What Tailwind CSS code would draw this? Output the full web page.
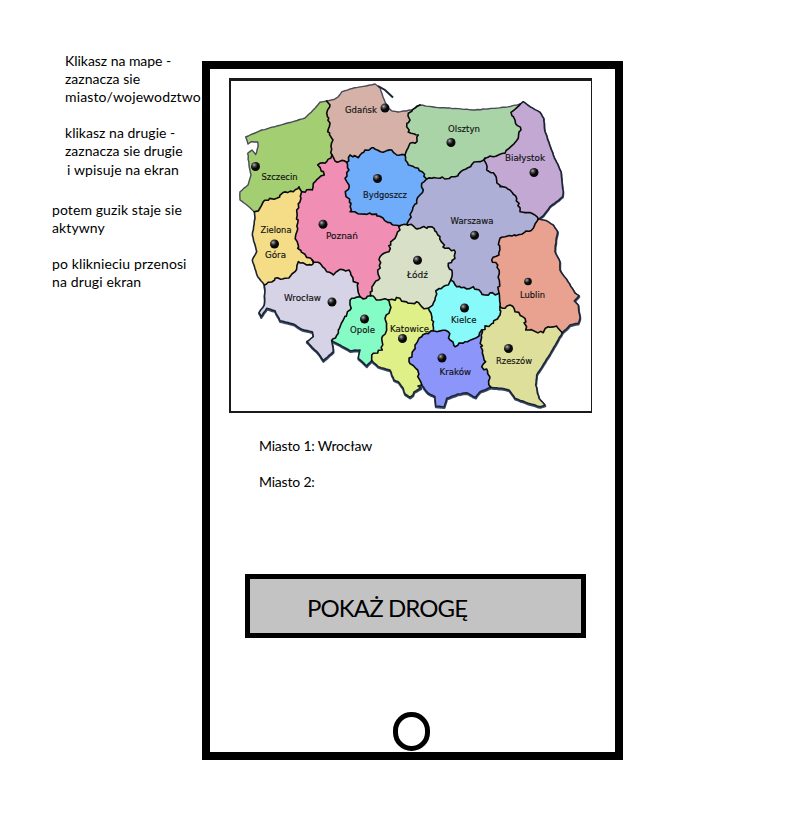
<!DOCTYPE html>
<html lang="pl">
<head>
<meta charset="utf-8">
<title>Pokaż drogę</title>
<script src="https://cdn.jsdelivr.net/npm/@tailwindcss/browser@4"></script>
</head>
<body class="bg-white text-black font-[Lato,'Noto_Sans',sans-serif] text-[14px] leading-[18px]">
<main class="flex w-[811px] h-[831px] overflow-hidden pt-[61px]">
  <aside class="w-[202px] shrink-0 pl-[52px] -mt-[9px] whitespace-nowrap tracking-[0.03px]">
    <p class="pl-[13px]"><span class="tracking-[-0.04px]">Klikasz na mape -</span><br>zaznacza sie<br><span class="tracking-[0.13px]">miasto/wojewodztwo</span></p>
    <p class="pl-[13px] pt-[18px]">klikasz na drugie -<br>zaznacza sie drugie</p>
    <p class="pl-[15px] pt-px tracking-[0.13px]">i wpisuje na ekran</p>
    <p class="pt-[22px] tracking-[0.1px]">potem guzik staje sie<br>aktywny</p>
    <p class="pt-[18px] tracking-[0.12px]">po kliknieciu przenosi<br>na drugi ekran</p>
  </aside>
  <section class="w-[421px] h-[699px] shrink-0 border-8 border-black flex flex-col">
    <div class="ml-[19px] mt-[9px] w-[363px] h-[335px] shrink-0 border-2 border-t-3 border-r border-[#1a1a1e]">
      <svg class="block w-[360px] h-[330px]" viewBox="231 81 360 330" id="map">
        <defs>
          <radialGradient id="pin" cx="35%" cy="32%" r="70%">
            <stop offset="0" stop-color="#b5b5b5"/><stop offset=".3" stop-color="#444"/><stop offset=".6" stop-color="#080808"/>
          </radialGradient>
        </defs>
        <g id="shadow"></g><g id="fills"></g><g id="lines"></g><g id="pins"></g>
        <g id="labels" font-family="DejaVu Sans, sans-serif" font-size="9" fill="#111" stroke="#111" stroke-width=".15"></g>
      </svg>
    </div>
    <div class="ml-[49px] mt-[24px] flex flex-col gap-[18px] tracking-[-0.2px]">
      <p>Miasto 1: Wrocław</p>
      <p>Miasto 2:</p>
    </div>
    <button class="ml-[35px] mt-[83px] w-[341px] h-[64px] shrink-0 border-[5px] border-black bg-[#c3c3c3] pl-[57px] pt-[4px] text-left text-[24px] leading-[50px] tracking-[-0.9px]">POKAŻ DROGĘ</button>
    <div class="ml-[183px] mt-[74px] w-[37px] h-[39px] shrink-0 rounded-full border-[5px] border-black"></div>
  </section>
</main>
<script>
// Borders between provinces, each listed once and shared by its two neighbours.
const arcs = {
  // outer edge, clockwise
  cS:"254.3,211.7 248,206 240,200 240,191.7 248,185 251,175 249,165 247.7,153.3 252,150 255.7,154.5 258,147 257.7,142 251.7,141.7 248,144 245.7,137 261.7,130 275,126.7 305,118 315,108.3 320,102.3 326.7,101",
  cG:"326.7,101 334,99.5 338,97 342,91.7 355,87.7 366,86 375,84 380,87.7 383,97 388,108 392,111 398,112 411.7,110 420,105",
  cO:"420,105 435,107.3 455,108.5 475,110 505,107.3 520,104.3",
  cB:"520,104.3 523.3,101.7 530,106.7 540,112.3 543.7,118.3 545,131.7 553.3,155 561,171.7 562,182 563.3,191.7 562.7,196.7 550,206.7 543.3,215.7 538.3,219",
  cL:"538.3,219 546,220.5 553.3,225 557.7,231.7 556,240 555,251.7 560,262 560,270 568,281.7 575,293 579,295.7 574.3,301 578.3,305 580,318.3 578.3,323.3 570,325 562.3,332.7",
  cR:"562.3,332.7 548.3,356.7 536.7,375 535.7,385 539,398.3 545,405 540,406.7 528.3,403.3 515,398.3 509,390 501.7,388.3 490.7,387.3",
  cK:"490.7,387.3 480,391.7 475.7,397.3 466.7,392.7 458,394 446.7,398.3 444.3,406.7 435.7,406 435,396.7 428.3,393.3 421.7,385",
  cT:"421.7,385 418,386 421,388 414,392 413,395 410,397.3 405,394 403,388 398.3,381.7 394,380 390,370 378.3,366.7 371.7,360.7",
  cP:"371.7,360.7 366.7,366 358.3,358.3 360,350 350,350.7 340,345 331.7,340.7",
  cW:"331.7,340.7 333.3,351.7 323.3,360.7 318.3,353.3 306.7,341.7 313.3,336.7 312.3,331.7 301.7,329.3 293.3,324 280,320.7 275,310.7 266.7,308.3 261,316.7 259,312.7 264.3,305 265,290 264.3,285",
  cZ:"264.3,285 257.7,276.7 252.3,260 256.7,251.7 252.3,235 255,218.3 254.3,211.7",
  // inner borders
  SG:"326.7,101 330,105 326.7,113.3 330,123 327.7,131.7 333,140 331,146.7 332,155",
  GP:"332,155 335,161 346.7,162.3",
  SP:"332,155 325,163.3 317.7,165 324.3,175 313.3,183.3 312.3,190 301.7,191.7",
  SZ:"301.7,191.7 299,186.7 293.3,191.7 283.3,192.3 276.7,198.3 264.7,200.3 260,208 254.3,211.7",
  ZP:"301.7,191.7 301,198.3 296.7,210 297.7,228.3 295.7,235 297.7,248.3 305,254.3 312.3,260",
  ZW:"312.3,260 311.7,265 306.7,265 298.3,261.7 295,271.7 285,278.3 275,278.3 271.7,282 264.3,285",
  PW:"312.3,260 320,263.3 326.7,271.7 333.3,275 340,269.3 349,270 353.3,281.7 358.3,283.3 360,296.7",
  PO:"360,296.7 363.3,299 370.7,295.7",
  WO:"360,296.7 351.7,298.3 350,310 343.3,320 338.3,333.3 331.7,340.7",
  PL:"370.7,295.7 373.3,285 378.3,280 380,256.7 389,251.7 390.7,241.7 395,238.3 400,230 400,225.7",
  GB:"346.7,162.3 350,155 358.3,157.7 365,150 373.3,147.7 383.3,152.3 391.7,150 396.7,155 405,155",
  GO:"420,105 408.3,113.3 410,120 406.7,126.7 411,133.3 418.3,135 415,143.3 410,143.3 405,155",
  BO:"405,155 408.3,165 418.3,168.3 426.7,179",
  OV:"426.7,179 440,178.3 455,176.7 463.3,170 476.7,161.7 485,158.3",
  OA:"520,104.3 511,112.3 515,120 521,130 518.3,138.3 505,153.3 493.3,156.7 485,158.3",
  AV:"485,158.3 486.7,170 495,175 500,186.7 510,190 516.7,198.3 520,211.7 531.7,213.3 538.3,219",
  BV:"426.7,179 421.7,183.3 423.3,190 416.7,200 411.7,211.7 407.7,225",
  BP:"346.7,162.3 349,170 345,178.3 349,185 345.7,195 351,203.3 350,211.7 358,213.7 370,213 383.3,218.3 391.7,224.3 400,225.7",
  BL:"400,225.7 407.7,225",
  LV:"407.7,225 420,228.3 431.7,226.7 440,236.7 445,248.3 454.3,250 455,258.3 448.3,263.3 452.3,273.3 450.7,280",
  VE:"450.7,280 456.7,286.7 466.7,289 473.3,286.7 485,295 499,293.3",
  VU:"538.3,219 533.3,228.3 521.7,234.3 500,238.3 499,255 491.7,260 497.7,265 499,293.3",
  UE:"499,293.3 500,306.7",
  UR:"500,306.7 505,308.3 510,305 515,311.7 525,318.3 525.7,330 543.3,332.7 548.3,326.7 556.7,326 562.3,332.7",
  ER:"500,306.7 500,315 493.3,323.3 481.7,330",
  EK:"481.7,330 479,336 465,341.7 455,346.7 450,340 448.3,331.7 433.3,330.7",
  KR:"481.7,330 481,340 482.3,353.3 485.7,361.7 481.7,366.7 487.7,371.7 490.7,387.3",
  ET:"428.3,308.3 431.7,320 433.3,330.7",
  LE:"450.7,280 448.3,285 435.7,291 435,300 428.3,308.3",
  LO:"370.7,295.7 380,300 388.3,300",
  LT:"388.3,300 400,298.3 408.3,303.3 416.7,301.7 421.7,306.7 428.3,308.3",
  OT:"388.3,300 390,310 385,318.3 386.7,330 381.7,338.3 382.3,350 373.3,353.3 371.7,360.7",
  TK:"433.3,330.7 421.7,336.7 415,345 409,361.7 417.7,370 417.7,376.7 421.7,385"
};
const regions = [
  ["#a3ce72","cS SG SP SZ"],
  ["#d5b1a7","cG GO -GB -GP -SG"],
  ["#a9d4a8","cO OA -OV -BO -GO"],
  ["#c2a8d3","cB -AV -OA"],
  ["#e9a28f","cL -UR -UE -VU"],
  ["#dfdf9c","cR -KR -ER UR"],
  ["#8c95fa","cK -TK -EK KR"],
  ["#e0f088","cT -OT LT ET TK"],
  ["#85fcc5","cP -WO PO LO OT"],
  ["#d6d3e6","cW -ZW PW WO"],
  ["#f5dc87","cZ -SZ ZP ZW"],
  ["#f08fb3","GP BP -PL -PO -PW -ZP -SP"],
  ["#6fadfb","GB BO BV -BL -BP"],
  ["#adafd6","OV AV VU -VE -LV -BV"],
  ["#d9e0c8","BL LV LE -LT -LO PL"],
  ["#88fafa","VE UE ER EK -ET -LE"]
];
let seed = 11;
const rnd = () => (seed = (seed * 16807) % 2147483647) / 2147483647 - .5;
const pts = {};
for (const k in arcs) {
  const base = arcs[k].split(" ").map(p => p.split(",").map(Number));
  const amp = k[0] === "c" ? .5 : 2.8;
  const out = [base[0]];
  for (let i = 1; i < base.length; i++) {
    const [x0, y0] = base[i - 1], [x1, y1] = base[i];
    const len = Math.hypot(x1 - x0, y1 - y0), n = Math.max(1, Math.round(len / 2.8));
    for (let j = 1; j < n; j++)
      out.push([x0 + (x1 - x0) * j / n + rnd() * amp, y0 + (y1 - y0) * j / n + rnd() * amp]);
    out.push([x1, y1]);
  }
  pts[k] = out;
}
const str = a => a.map(p => p[0].toFixed(1) + "," + p[1].toFixed(1)).join(" ");
const fetchArc = k => k[0] === "-" ? [...pts[k.slice(1)]].reverse() : pts[k];
const put = (id, html) => document.getElementById(id).innerHTML = html;
put("fills", regions.map(([c, l]) => `<polygon fill="${c}" stroke="${c}" stroke-width=".5" points="${str(l.split(" ").flatMap(fetchArc))}"/>`).join(""));
put("lines", Object.keys(pts).map(k => {
  const coast = k[0] === "c", north = ["cS","cG","cO"].includes(k);
  return `<polyline fill="none" stroke-linejoin="round" stroke-linecap="round" stroke="${north ? "#4a4a58" : coast ? "#1b2433" : "#0a0a0a"}" stroke-width="${north ? 1.4 : 1.6}" points="${str(pts[k])}"/>`;
}).join("") + '<path d="M378 86L385 90L393 97.5" fill="none" stroke="#1b2433" stroke-width="2"/>');
put("shadow", ["cB","cL","cR","cK","cT","cP","cW"].map(k => `<polyline transform="translate(${k === "cB" ? "0 .8" : ".2 1.1"})" fill="none" stroke="#3a4a68" stroke-width="2.2" stroke-linejoin="round" points="${str(pts[k])}"/>`).join(""));
put("pins", [[385,108],[255.5,166.5],[451,142.5],[534,172.5],[377.5,178.5],[274.5,244],[323,224.3],[474.5,235.3],[417.5,260.3],[528,281.5],[332,302],[364.5,319],[402.5,338.5],[464.5,308],[442,358],[508.5,348.5]]
  .map(([x, y]) => `<circle cx="${x}" cy="${y}" r="${x === 528 ? 3.8 : 4.5}" fill="url(#pin)"/>`).join(""));
put("labels", [["Gdańsk",345,113.3,32],["Szczecin",261.5,180.3,36],["Olsztyn",448,132,32],["Białystok",505,161.3,40],["Bydgoszcz",363,198,44],["Zielona",260.5,233,31],["Góra",265,258.3,21],["Poznań",326,239,32],["Warszawa",450.5,224.3,43],["Łódź",407,277.8,21],["Lublin",520,298.3,25],["Wrocław",284,301.3,37],["Opole",350,333,25],["Katowice",390,331.8,39],["Kielce",451,323,25.5],["Kraków",439.5,375.3,31.5],["Rzeszów",496,364.3,36]]
  .map(([t, x, y, w]) => `<text x="${x}" y="${y}" textLength="${w}" lengthAdjust="spacingAndGlyphs">${t}</text>`).join(""));
</script>
</body>
</html>
